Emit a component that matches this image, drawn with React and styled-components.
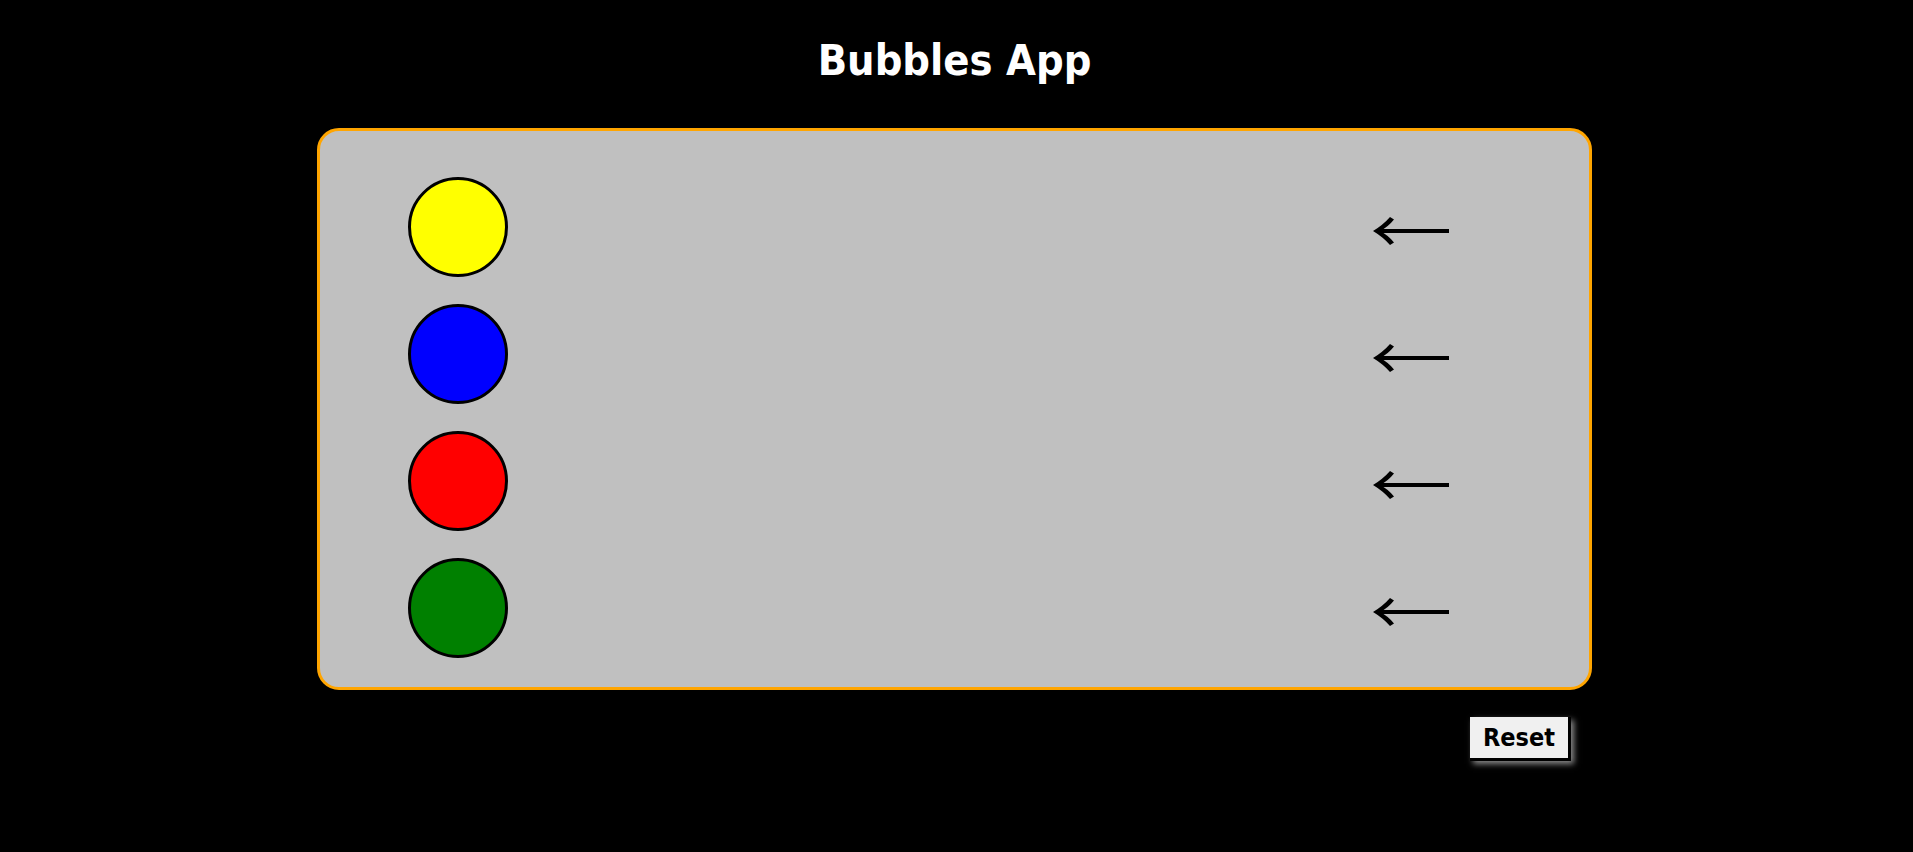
import React from 'react';
import styled, { createGlobalStyle } from 'styled-components';

const GlobalStyle = createGlobalStyle`
  html, body {
    margin: 0;
    padding: 0;
    background: #000;
  }
  body {
    font-family: "DejaVu Sans Condensed", "DejaVu Sans", sans-serif;
  }
`;

const Page = styled.div`
  min-height: 100vh;
  padding-right: 4px;
  box-sizing: border-box;
  display: flex;
  flex-direction: column;
  align-items: center;
`;

const Title = styled.h1`
  margin: 35px 0 43px;
  font-size: 43px;
  line-height: 50px;
  font-weight: bold;
  color: #fff;
`;

const Board = styled.div`
  width: 1275px;
  box-sizing: border-box;
  background: #c0c0c0;
  border: 3px solid #ffa500;
  border-radius: 22px;
  padding: 46px 0 29px;
  display: flex;
  flex-direction: column;
  gap: 27px;
`;

const Row = styled.div`
  height: 100px;
  display: flex;
  align-items: center;
  justify-content: space-between;
  padding: 0 140px 0 88px;
`;

const Bubble = styled.div`
  width: 100px;
  height: 100px;
  box-sizing: border-box;
  border-radius: 50%;
  border: 3px solid #000;
  background: ${(p) => p.color};
`;

const Arrow = styled.svg`
  width: 76px;
  height: 30px;
  margin-top: 8px;
  display: block;
`;

const Footer = styled.div`
  width: 1275px;
  box-sizing: border-box;
  display: flex;
  justify-content: flex-end;
  padding: 27px 21px 0 0;
`;

const ResetButton = styled.button`
  font-family: "DejaVu Sans Condensed", "DejaVu Sans", sans-serif;
  font-size: 25px;
  line-height: 29px;
  font-weight: bold;
  color: #000;
  background: #f0f0f0;
  border: none;
  border-right: 3px solid #000;
  border-bottom: 3px solid #000;
  border-radius: 0;
  padding: 6px 0;
  width: 101px;
  box-shadow: 3px 3px 6px #8a8a8a;
  cursor: pointer;
`;

const LeftArrow = () => (
  <Arrow viewBox="0 0 76 30">
    <line x1="6" y1="15" x2="76" y2="15" stroke="#000" strokeWidth="4" />
    <path
      d="M0 15 Q10 9 17 1 L21 3.5 Q15 11 7 15 Q15 19 21 26.5 L17 29 Q10 21 0 15 Z"
      fill="#000"
    />
  </Arrow>
);

const bubbles = ['#ffff00', '#0000ff', '#ff0000', '#008000'];

const App = () => (
  <>
    <GlobalStyle />
    <Page>
      <Title>Bubbles App</Title>
      <Board>
        {bubbles.map((color) => (
          <Row key={color}>
            <Bubble color={color} />
            <LeftArrow />
          </Row>
        ))}
      </Board>
      <Footer>
        <ResetButton>Reset</ResetButton>
      </Footer>
    </Page>
  </>
);

export default App;
